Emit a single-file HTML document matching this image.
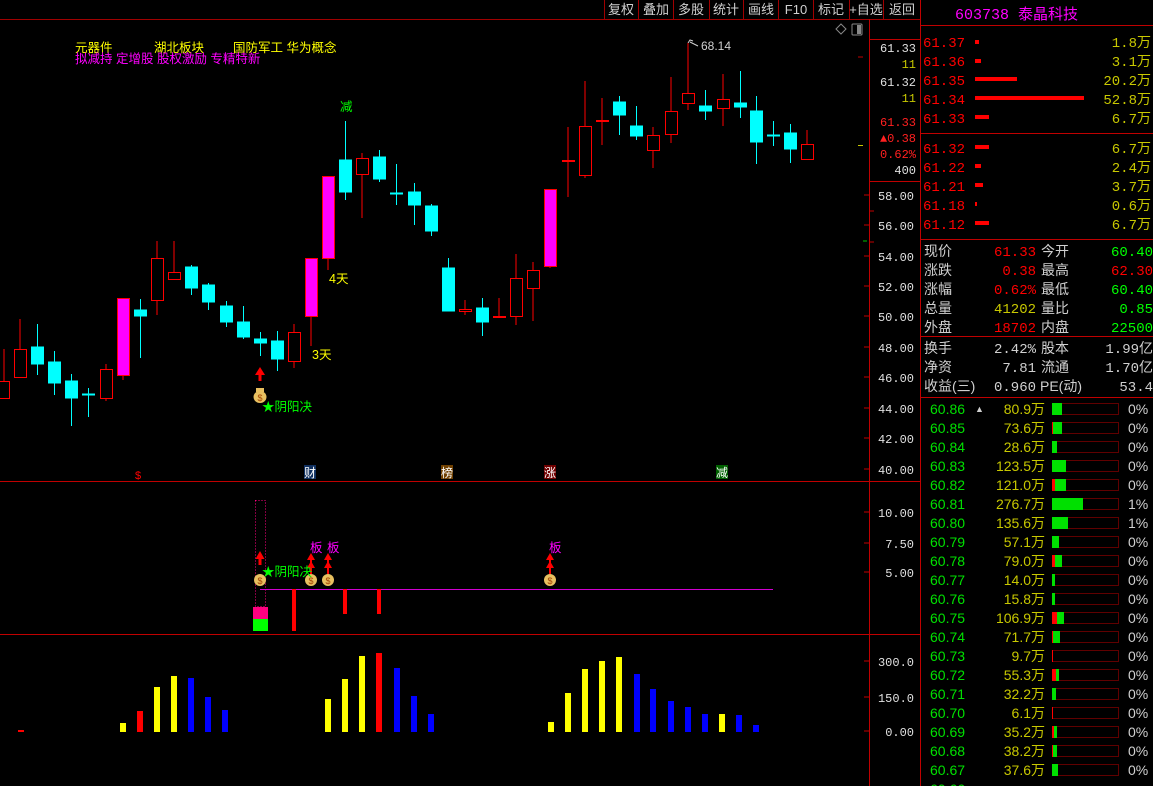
<!DOCTYPE html>
<html><head><meta charset="utf-8"><style>
html,body{margin:0;padding:0;background:#000;width:1153px;height:786px;overflow:hidden}
svg{position:absolute;left:0;top:0}
text{font-family:"Liberation Sans","Noto Sans CJK SC",sans-serif}
.m{font-family:"Liberation Mono","Noto Sans CJK SC",monospace}
</style></head><body>
<svg width="1153" height="786" viewBox="0 0 1153 786" xmlns="http://www.w3.org/2000/svg">
<line x1="0" y1="19.5" x2="920" y2="19.5" stroke="#a00000"/>
<line x1="869.5" y1="19" x2="869.5" y2="786" stroke="#c00000"/>
<line x1="920.5" y1="0" x2="920.5" y2="786" stroke="#c00000"/>
<line x1="870" y1="39.5" x2="920" y2="39.5" stroke="#c00000"/>
<line x1="870" y1="181.5" x2="920" y2="181.5" stroke="#c00000"/>
<line x1="0" y1="481.5" x2="920" y2="481.5" stroke="#c00000"/>
<line x1="0" y1="634.5" x2="920" y2="634.5" stroke="#c00000"/>
<g stroke="#a00000">
<line x1="604.5" y1="0" x2="604.5" y2="19"/><line x1="638.5" y1="0" x2="638.5" y2="19"/>
<line x1="673.5" y1="0" x2="673.5" y2="19"/><line x1="709.5" y1="0" x2="709.5" y2="19"/>
<line x1="743.5" y1="0" x2="743.5" y2="19"/><line x1="778.5" y1="0" x2="778.5" y2="19"/>
<line x1="813.5" y1="0" x2="813.5" y2="19"/><line x1="849.5" y1="0" x2="849.5" y2="19"/>
<line x1="883.5" y1="0" x2="883.5" y2="19"/>
</g>
<g fill="#d0d0d0" font-size="13" text-anchor="middle">
<text x="621" y="14">复权</text><text x="656" y="14">叠加</text><text x="691" y="14">多股</text>
<text x="726" y="14">统计</text><text x="761" y="14">画线</text><text x="796" y="14">F10</text>
<text x="831" y="14">标记</text><text x="866" y="14">+自选</text><text x="902" y="14">返回</text>
</g>
<path d="M841 24 L846 29 L841 34 L836 29Z" fill="none" stroke="#888"/>
<rect x="852" y="24" width="10" height="11" fill="none" stroke="#888" rx="1"/><rect x="857" y="25" width="4" height="9" fill="#888"/>
<g font-size="12.5">
<text x="75" y="52" fill="#ffff00">元器件</text>
<text x="154" y="52" fill="#ffff00">湖北板块</text>
<text x="233" y="52" fill="#ffff00">国防军工 华为概念</text>
<text x="75" y="63" fill="#ff00ff">拟减持 定增股 股权激励 专精特新</text>
<text x="340" y="111" fill="#00ff00">减</text>
<text x="329" y="283" fill="#ffff00">4天</text>
<text x="312" y="359" fill="#ffff00">3天</text>
<text x="262" y="411" fill="#00ff00">★阴阳决</text>
</g>
<text x="701" y="50" font-size="12" fill="#d0d0d0">68.14</text>
<path d="M688 43 L690 40 L693 41 M690 42 L698 46" stroke="#d0d0d0" fill="none"/>
<g stroke="#c00000"><line x1="858" y1="57" x2="863" y2="57"/><line x1="858" y1="145.5" x2="863" y2="145.5" stroke="#c8c800"/>
<line x1="870" y1="211" x2="874" y2="211"/><line x1="870" y1="242" x2="874" y2="242"/></g>
<g font-size="12" fill="#e0e0e0" text-anchor="end" class="m">
<text x="916" y="52" class="m">61.33</text><text x="916" y="68" fill="#c8c800" class="m">11</text>
<text x="916" y="86" class="m">61.32</text><text x="916" y="102" fill="#c8c800" class="m">11</text>
<text x="916" y="126" fill="#ff2020" class="m">61.33</text><text x="916" y="142" fill="#ff2020" class="m">▲0.38</text>
<text x="916" y="158" fill="#ff2020" class="m">0.62%</text><text x="916" y="174" class="m">400</text>
<text x="914" y="200" class="m">58.00</text><text x="914" y="230" class="m">56.00</text><text x="914" y="261" class="m">54.00</text>
<text x="914" y="291" class="m">52.00</text><text x="914" y="321" class="m">50.00</text><text x="914" y="352" class="m">48.00</text>
<text x="914" y="382" class="m">46.00</text><text x="914" y="413" class="m">44.00</text><text x="914" y="443" class="m">42.00</text>
<text x="914" y="474" class="m">40.00</text>
<text x="914" y="517" class="m">10.00</text><text x="914" y="548" class="m">7.50</text><text x="914" y="577" class="m">5.00</text>
<text x="914" y="666" class="m">300.0</text><text x="914" y="702" class="m">150.0</text><text x="914" y="736" class="m">0.00</text>
</g>
<g stroke="#c00000">
<line x1="864" y1="195" x2="870" y2="195"/><line x1="864" y1="225" x2="870" y2="225"/><line x1="864" y1="256" x2="870" y2="256"/>
<line x1="864" y1="286" x2="870" y2="286"/><line x1="864" y1="316" x2="870" y2="316"/><line x1="864" y1="347" x2="870" y2="347"/>
<line x1="864" y1="377" x2="870" y2="377"/><line x1="864" y1="408" x2="870" y2="408"/><line x1="864" y1="438" x2="870" y2="438"/>
<line x1="864" y1="469" x2="870" y2="469"/><line x1="864" y1="512" x2="870" y2="512"/><line x1="864" y1="543" x2="870" y2="543"/>
<line x1="864" y1="572" x2="870" y2="572"/><line x1="864" y1="661" x2="870" y2="661"/><line x1="864" y1="697" x2="870" y2="697"/>
<line x1="864" y1="731" x2="870" y2="731"/>
</g>
<line x1="863" y1="241" x2="867" y2="241" stroke="#00c000"/>
<g>
<g stroke="#ff0000" fill="#000">
<line x1="4" y1="349" x2="4" y2="381"/><rect x="-2.5" y="381.5" width="12" height="17"/>
<line x1="20" y1="319" x2="20" y2="349"/><rect x="14.5" y="349.5" width="12" height="28"/>
<line x1="106" y1="364" x2="106" y2="401"/><rect x="100.5" y="369.5" width="12" height="29"/>
<line x1="157" y1="241" x2="157" y2="315"/><rect x="151.5" y="258.5" width="12" height="42"/>
<line x1="174" y1="241" x2="174" y2="272"/><rect x="168.5" y="272.5" width="12" height="7"/>
<line x1="294" y1="324" x2="294" y2="368"/><rect x="288.5" y="332.5" width="12" height="29"/>
<line x1="362" y1="153" x2="362" y2="218"/><rect x="356.5" y="158.5" width="12" height="16"/>
<line x1="465" y1="300" x2="465" y2="315"/><rect x="459.5" y="309.5" width="12" height="2"/>
<line x1="499" y1="298" x2="499" y2="318"/><rect x="493.5" y="316.5" width="12" height="1"/>
<line x1="516" y1="254" x2="516" y2="325"/><rect x="510.5" y="278.5" width="12" height="38"/>
<line x1="533" y1="262" x2="533" y2="321"/><rect x="527.5" y="270.5" width="12" height="18"/>
<line x1="568" y1="127" x2="568" y2="197"/><rect x="562.5" y="160.5" width="12" height="1"/>
<line x1="585" y1="81" x2="585" y2="178"/><rect x="579.5" y="126.5" width="12" height="49"/>
<line x1="602" y1="98" x2="602" y2="145"/><rect x="596.5" y="120.5" width="12" height="1"/>
<line x1="653" y1="127" x2="653" y2="168"/><rect x="647.5" y="135.5" width="12" height="15"/>
<line x1="671" y1="77" x2="671" y2="143"/><rect x="665.5" y="111.5" width="12" height="23"/>
<line x1="688" y1="43" x2="688" y2="110"/><rect x="682.5" y="93.5" width="12" height="10"/>
<line x1="723" y1="74" x2="723" y2="126"/><rect x="717.5" y="99.5" width="12" height="9"/>
<line x1="807" y1="130" x2="807" y2="159"/><rect x="801.5" y="144.5" width="12" height="15"/>
</g>
<g stroke="#ff0000" fill="#ff00ff">
<line x1="123" y1="375" x2="123" y2="380"/><rect x="117.5" y="298.5" width="12" height="77"/>
<line x1="311" y1="316" x2="311" y2="346"/><rect x="305.5" y="258.5" width="12" height="58"/>
<line x1="328" y1="258" x2="328" y2="270"/><rect x="322.5" y="176.5" width="12" height="82"/>
<line x1="550" y1="266" x2="550" y2="268"/><rect x="544.5" y="189.5" width="12" height="77"/>
</g>
<g stroke="#00ffff" fill="#00ffff">
<line x1="37.5" y1="324" x2="37.5" y2="375"/><rect x="31.5" y="347" width="12" height="17"/>
<line x1="54.5" y1="351" x2="54.5" y2="395"/><rect x="48.5" y="362" width="12" height="21"/>
<line x1="71.5" y1="374" x2="71.5" y2="426"/><rect x="65.5" y="381" width="12" height="17"/>
<line x1="88.5" y1="388" x2="88.5" y2="417"/><rect x="82.5" y="394" width="12" height="1"/>
<line x1="140.5" y1="299" x2="140.5" y2="358"/><rect x="134.5" y="310" width="12" height="6"/>
<line x1="191.5" y1="265" x2="191.5" y2="295"/><rect x="185.5" y="267" width="12" height="21"/>
<line x1="208.5" y1="283" x2="208.5" y2="310"/><rect x="202.5" y="285" width="12" height="17"/>
<line x1="226.5" y1="301" x2="226.5" y2="327"/><rect x="220.5" y="306" width="12" height="16"/>
<line x1="243.5" y1="306" x2="243.5" y2="339"/><rect x="237.5" y="322" width="12" height="15"/>
<line x1="260.5" y1="332" x2="260.5" y2="356"/><rect x="254.5" y="339" width="12" height="4"/>
<line x1="277.5" y1="331" x2="277.5" y2="371"/><rect x="271.5" y="341" width="12" height="18"/>
<line x1="345.5" y1="121" x2="345.5" y2="200"/><rect x="339.5" y="160" width="12" height="32"/>
<line x1="379.5" y1="150" x2="379.5" y2="182"/><rect x="373.5" y="157" width="12" height="22"/>
<line x1="396.5" y1="164" x2="396.5" y2="205"/><rect x="390.5" y="193" width="12" height="1"/>
<line x1="414.5" y1="183" x2="414.5" y2="225"/><rect x="408.5" y="192" width="12" height="13"/>
<line x1="431.5" y1="204" x2="431.5" y2="236"/><rect x="425.5" y="206" width="12" height="25"/>
<line x1="448.5" y1="258" x2="448.5" y2="311"/><rect x="442.5" y="268" width="12" height="43"/>
<line x1="482.5" y1="298" x2="482.5" y2="336"/><rect x="476.5" y="308" width="12" height="14"/>
<line x1="619.5" y1="96" x2="619.5" y2="135"/><rect x="613.5" y="102" width="12" height="13"/>
<line x1="636.5" y1="106" x2="636.5" y2="140"/><rect x="630.5" y="126" width="12" height="10"/>
<line x1="705.5" y1="90" x2="705.5" y2="120"/><rect x="699.5" y="106" width="12" height="5"/>
<line x1="740.5" y1="71" x2="740.5" y2="118"/><rect x="734.5" y="103" width="12" height="4"/>
<line x1="756.5" y1="96" x2="756.5" y2="164"/><rect x="750.5" y="111" width="12" height="31"/>
<line x1="773.5" y1="121" x2="773.5" y2="146"/><rect x="767.5" y="135" width="12" height="1"/>
<line x1="790.5" y1="124" x2="790.5" y2="163"/><rect x="784.5" y="133" width="12" height="16"/>
</g>
</g>
<path d="M260 367 L255 375 L258.5 375 L258.5 381 L261.5 381 L261.5 375 L265 375Z" fill="#ff0000"/>
<g><ellipse cx="260" cy="397" rx="6.5" ry="6" fill="#e8c060"/><rect x="256" y="388" width="8" height="4" fill="#e8c060"/><text x="260" y="401" font-size="9" fill="#a04000" text-anchor="middle">$</text></g>
<text x="138" y="479" font-size="11" fill="#ff0000" text-anchor="middle">$</text>
<rect x="304" y="465" width="12" height="14" fill="#103060"/><text x="310" y="477" font-size="12" fill="#fff" text-anchor="middle">财</text>
<rect x="441" y="465" width="12" height="14" fill="#704000"/><text x="447" y="477" font-size="12" fill="#fff" text-anchor="middle">榜</text>
<rect x="544" y="465" width="12" height="14" fill="#700000"/><text x="550" y="477" font-size="12" fill="#fff" text-anchor="middle">涨</text>
<rect x="716" y="465" width="12" height="14" fill="#006000"/><text x="722" y="477" font-size="12" fill="#fff" text-anchor="middle">减</text>
<rect x="255.5" y="500.5" width="10" height="106" fill="none" stroke="#ff0080" stroke-dasharray="1,2"/>
<rect x="260" y="589" width="513" height="1" fill="#d000d0"/>
<rect x="253" y="607" width="15" height="12" fill="#ff0080"/><rect x="253" y="619" width="15" height="12" fill="#00ff00"/>
<rect x="292" y="589" width="4" height="42" fill="#ff0000"/>
<rect x="343" y="589" width="4" height="25" fill="#ff0000"/>
<rect x="377" y="589" width="4" height="25" fill="#ff0000"/>
<g fill="#ff0000">
<path d="M260 551 L255.5 559 L258.5 559 L258.5 565 L261.5 565 L261.5 559 L264.5 559Z"/>
<path d="M311 553 L307 560 L315 560Z M311 561 L307 568 L315 568Z"/><rect x="310" y="560" width="2" height="14"/>
<path d="M328 553 L324 560 L332 560Z M328 561 L324 568 L332 568Z"/><rect x="327" y="560" width="2" height="14"/>
<path d="M550 553 L546 560 L554 560Z M550 561 L546 568 L554 568Z"/><rect x="549" y="560" width="2" height="14"/>
</g>
<g fill="#e8c060"><ellipse cx="260" cy="580" rx="6" ry="6"/><ellipse cx="311" cy="580" rx="6" ry="6"/><ellipse cx="328" cy="580" rx="6" ry="6"/><ellipse cx="550" cy="580" rx="6" ry="6"/></g>
<g font-size="9" fill="#a04000" text-anchor="middle"><text x="260" y="584">$</text><text x="311" y="584">$</text><text x="328" y="584">$</text><text x="550" y="584">$</text></g>
<g font-size="12.5" fill="#ff00ff"><text x="310" y="552">板</text><text x="327" y="552">板</text><text x="549" y="552">板</text></g>
<text x="262" y="576" font-size="12.5" fill="#00ff00">★阴阳决</text>
<g>
<rect x="18" y="730" width="6" height="2" fill="#f00"/>
<rect x="120" y="723" width="6" height="9" fill="#ff0"/><rect x="137" y="711" width="6" height="21" fill="#f00"/>
<rect x="154" y="687" width="6" height="45" fill="#ff0"/><rect x="171" y="676" width="6" height="56" fill="#ff0"/>
<rect x="188" y="678" width="6" height="54" fill="#00f"/><rect x="205" y="697" width="6" height="35" fill="#00f"/>
<rect x="222" y="710" width="6" height="22" fill="#00f"/>
<rect x="325" y="699" width="6" height="33" fill="#ff0"/><rect x="342" y="679" width="6" height="53" fill="#ff0"/>
<rect x="359" y="656" width="6" height="76" fill="#ff0"/><rect x="376" y="653" width="6" height="79" fill="#f00"/>
<rect x="394" y="668" width="6" height="64" fill="#00f"/><rect x="411" y="696" width="6" height="36" fill="#00f"/>
<rect x="428" y="714" width="6" height="18" fill="#00f"/>
<rect x="548" y="722" width="6" height="10" fill="#ff0"/><rect x="565" y="693" width="6" height="39" fill="#ff0"/>
<rect x="582" y="669" width="6" height="63" fill="#ff0"/><rect x="599" y="661" width="6" height="71" fill="#ff0"/>
<rect x="616" y="657" width="6" height="75" fill="#ff0"/><rect x="634" y="674" width="6" height="58" fill="#00f"/>
<rect x="650" y="689" width="6" height="43" fill="#00f"/><rect x="668" y="701" width="6" height="31" fill="#00f"/>
<rect x="685" y="707" width="6" height="25" fill="#00f"/><rect x="702" y="714" width="6" height="18" fill="#00f"/>
<rect x="719" y="714" width="6" height="18" fill="#ff0"/><rect x="736" y="715" width="6" height="17" fill="#00f"/>
<rect x="753" y="725" width="6" height="7" fill="#00f"/>
</g>
<text x="955" y="19" font-size="15" fill="#ff00ff" class="m">603738 泰晶科技</text>
<g stroke="#c00000"><line x1="921" y1="25.5" x2="1153" y2="25.5"/><line x1="921" y1="133.5" x2="1153" y2="133.5"/>
<line x1="921" y1="239.5" x2="1153" y2="239.5"/><line x1="921" y1="336.5" x2="1153" y2="336.5"/><line x1="921" y1="397.5" x2="1153" y2="397.5"/></g>
<g font-size="14" fill="#ff0000" class="m">
<text x="923" y="47" class="m">61.37</text><text x="923" y="66" class="m">61.36</text><text x="923" y="85" class="m">61.35</text>
<text x="923" y="104" class="m">61.34</text><text x="923" y="123" class="m">61.33</text>
<text x="923" y="153" class="m">61.32</text><text x="923" y="172" class="m">61.22</text><text x="923" y="191" class="m">61.21</text>
<text x="923" y="210" class="m">61.18</text><text x="923" y="229" class="m">61.12</text>
</g>
<g fill="#ff0000">
<rect x="975" y="40" width="4" height="4"/><rect x="975" y="59" width="6" height="4"/><rect x="975" y="77" width="42" height="4"/>
<rect x="975" y="96" width="109" height="4"/><rect x="975" y="115" width="14" height="4"/>
<rect x="975" y="145" width="14" height="4"/><rect x="975" y="164" width="6" height="4"/><rect x="975" y="183" width="8" height="4"/>
<rect x="975" y="202" width="2" height="4"/><rect x="975" y="221" width="14" height="4"/>
</g>
<g font-size="14" fill="#c8c800" text-anchor="end" class="m">
<text x="1151" y="47" class="m">1.8万</text><text x="1151" y="66" class="m">3.1万</text><text x="1151" y="85" class="m">20.2万</text>
<text x="1151" y="104" class="m">52.8万</text><text x="1151" y="123" class="m">6.7万</text>
<text x="1151" y="153" class="m">6.7万</text><text x="1151" y="172" class="m">2.4万</text><text x="1151" y="191" class="m">3.7万</text>
<text x="1151" y="210" class="m">0.6万</text><text x="1151" y="229" class="m">6.7万</text>
</g>
<g font-size="14" fill="#d0d0d0" class="m">
<text x="924" y="256">现价</text><text x="924" y="275">涨跌</text><text x="924" y="294">涨幅</text><text x="924" y="313">总量</text><text x="924" y="332">外盘</text>
<text x="1041" y="256">今开</text><text x="1041" y="275">最高</text><text x="1041" y="294">最低</text><text x="1041" y="313">量比</text><text x="1041" y="332">内盘</text>
<text x="924" y="353">换手</text><text x="924" y="372">净资</text><text x="924" y="391">收益(三)</text>
<text x="1041" y="353">股本</text><text x="1041" y="372">流通</text><text x="1040" y="391">PE(动)</text>
</g>
<g font-size="14" text-anchor="end" class="m">
<text x="1036" y="256" fill="#ff0000" class="m">61.33</text><text x="1036" y="275" fill="#ff0000" class="m">0.38</text>
<text x="1036" y="294" fill="#ff0000" class="m">0.62%</text><text x="1036" y="313" fill="#c8c800" class="m">41202</text>
<text x="1036" y="332" fill="#ff0000" class="m">18702</text>
<text x="1153" y="256" fill="#00ff00" class="m">60.40</text><text x="1153" y="275" fill="#ff0000" class="m">62.30</text>
<text x="1153" y="294" fill="#00ff00" class="m">60.40</text><text x="1153" y="313" fill="#00ff00" class="m">0.85</text>
<text x="1153" y="332" fill="#00ff00" class="m">22500</text>
<text x="1036" y="353" fill="#d0d0d0" class="m">2.42%</text><text x="1036" y="372" fill="#d0d0d0" class="m">7.81</text>
<text x="1036" y="391" fill="#d0d0d0" class="m">0.960</text>
<text x="1153" y="353" fill="#d0d0d0" class="m">1.99亿</text><text x="1153" y="372" fill="#d0d0d0" class="m">1.70亿</text>
<text x="1153" y="391" fill="#d0d0d0" class="m">53.4</text>
</g>
<g font-size="14" class="m">
<g fill="#00e000">
<text x="930" y="414">60.86</text><text x="930" y="433">60.85</text><text x="930" y="452">60.84</text><text x="930" y="471">60.83</text>
<text x="930" y="490">60.82</text><text x="930" y="509">60.81</text><text x="930" y="528">60.80</text><text x="930" y="547">60.79</text>
<text x="930" y="566">60.78</text><text x="930" y="585">60.77</text><text x="930" y="604">60.76</text><text x="930" y="623">60.75</text>
<text x="930" y="642">60.74</text><text x="930" y="661">60.73</text><text x="930" y="680">60.72</text><text x="930" y="699">60.71</text>
<text x="930" y="718">60.70</text><text x="930" y="737">60.69</text><text x="930" y="756">60.68</text><text x="930" y="775">60.67</text>
<text x="930" y="794">60.66</text>
</g>
<text x="975" y="412" font-size="9" fill="#d0d0d0">▲</text>
<g fill="#c8c800" text-anchor="end">
<text x="1045" y="414">80.9万</text><text x="1045" y="433">73.6万</text><text x="1045" y="452">28.6万</text><text x="1045" y="471">123.5万</text>
<text x="1045" y="490">121.0万</text><text x="1045" y="509">276.7万</text><text x="1045" y="528">135.6万</text><text x="1045" y="547">57.1万</text>
<text x="1045" y="566">79.0万</text><text x="1045" y="585">14.0万</text><text x="1045" y="604">15.8万</text><text x="1045" y="623">106.9万</text>
<text x="1045" y="642">71.7万</text><text x="1045" y="661">9.7万</text><text x="1045" y="680">55.3万</text><text x="1045" y="699">32.2万</text>
<text x="1045" y="718">6.1万</text><text x="1045" y="737">35.2万</text><text x="1045" y="756">38.2万</text><text x="1045" y="775">37.6万</text>
</g>
<g fill="#d0d0d0">
<text x="1128" y="414">0%</text><text x="1128" y="433">0%</text><text x="1128" y="452">0%</text><text x="1128" y="471">0%</text>
<text x="1128" y="490">0%</text><text x="1128" y="509">1%</text><text x="1128" y="528">1%</text><text x="1128" y="547">0%</text>
<text x="1128" y="566">0%</text><text x="1128" y="585">0%</text><text x="1128" y="604">0%</text><text x="1128" y="623">0%</text>
<text x="1128" y="642">0%</text><text x="1128" y="661">0%</text><text x="1128" y="680">0%</text><text x="1128" y="699">0%</text>
<text x="1128" y="718">0%</text><text x="1128" y="737">0%</text><text x="1128" y="756">0%</text><text x="1128" y="775">0%</text>
</g>
</g>
<g fill="none" stroke="#c00000" stroke-dasharray="1,1">
<rect x="1052.5" y="403.5" width="66" height="11"/><rect x="1052.5" y="422.5" width="66" height="11"/><rect x="1052.5" y="441.5" width="66" height="11"/>
<rect x="1052.5" y="460.5" width="66" height="11"/><rect x="1052.5" y="479.5" width="66" height="11"/><rect x="1052.5" y="498.5" width="66" height="11"/>
<rect x="1052.5" y="517.5" width="66" height="11"/><rect x="1052.5" y="536.5" width="66" height="11"/><rect x="1052.5" y="555.5" width="66" height="11"/>
<rect x="1052.5" y="574.5" width="66" height="11"/><rect x="1052.5" y="593.5" width="66" height="11"/><rect x="1052.5" y="612.5" width="66" height="11"/>
<rect x="1052.5" y="631.5" width="66" height="11"/><rect x="1052.5" y="650.5" width="66" height="11"/><rect x="1052.5" y="669.5" width="66" height="11"/>
<rect x="1052.5" y="688.5" width="66" height="11"/><rect x="1052.5" y="707.5" width="66" height="11"/><rect x="1052.5" y="726.5" width="66" height="11"/>
<rect x="1052.5" y="745.5" width="66" height="11"/><rect x="1052.5" y="764.5" width="66" height="11"/>
</g>
<g fill="#00e000">
<rect x="1052" y="403" width="10" height="12"/><rect x="1052" y="422" width="10" height="12"/><rect x="1052" y="441" width="5" height="12"/>
<rect x="1052" y="460" width="14" height="12"/><rect x="1052" y="479" width="14" height="12"/><rect x="1052" y="498" width="31" height="12"/>
<rect x="1052" y="517" width="16" height="12"/><rect x="1052" y="536" width="7" height="12"/><rect x="1052" y="555" width="10" height="12"/>
<rect x="1052" y="574" width="3" height="12"/><rect x="1052" y="593" width="3" height="12"/><rect x="1052" y="612" width="12" height="12"/>
<rect x="1052" y="631" width="8" height="12"/><rect x="1052" y="669" width="7" height="12"/><rect x="1052" y="688" width="4" height="12"/>
<rect x="1052" y="726" width="5" height="12"/><rect x="1052" y="745" width="5" height="12"/><rect x="1052" y="764" width="6" height="12"/>
</g>
<g fill="#ff0000">
<rect x="1052" y="422" width="1" height="12"/><rect x="1052" y="479" width="3" height="12"/><rect x="1052" y="555" width="3" height="12"/>
<rect x="1052" y="612" width="5" height="12"/><rect x="1052" y="631" width="1" height="12"/><rect x="1052" y="650" width="1" height="12"/>
<rect x="1052" y="669" width="4" height="12"/><rect x="1052" y="707" width="1" height="12"/><rect x="1052" y="726" width="2" height="12"/>
<rect x="1052" y="745" width="1" height="12"/>
</g>
</svg>
</body></html>
